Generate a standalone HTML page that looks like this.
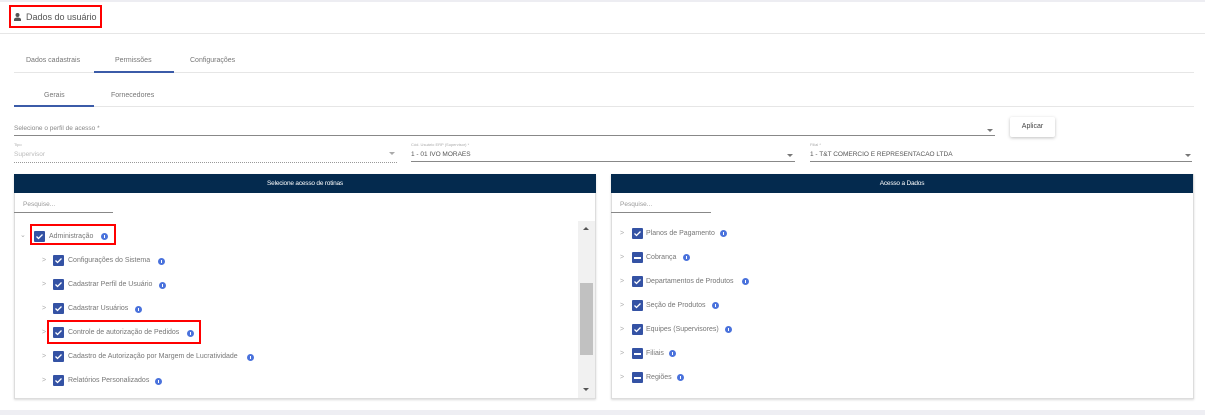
<!DOCTYPE html>
<html><head><meta charset="utf-8"><style>
*{margin:0;padding:0;box-sizing:border-box}
body{width:1205px;height:415px;position:relative;background:#fff;font-family:"Liberation Sans",sans-serif;color:#666;overflow:hidden}
.a{position:absolute;white-space:nowrap}
.t{font-size:7px;color:#777}
.r{margin-top:2px}
.hl{position:absolute;height:1px;background:#e6e6e6}
.cb{position:absolute;width:11px;height:11px;background:#3452a4;border-radius:1px}
.cb svg{position:absolute;left:1px;top:1px}
.dash{position:absolute;left:2px;top:5px;width:7px;height:1.5px;background:#fff}
.i{position:absolute;width:7px;height:7px;border-radius:50%;background:#4a72dc}
.i:after{content:"";position:absolute;left:3px;top:2px;width:1px;height:3px;background:#fff}
.ch{position:absolute;font-size:7px;color:#aaa;margin-top:2px}
.red{position:absolute;border:2.5px solid #f00}
.arr{position:absolute;width:0;height:0;border-left:3px solid transparent;border-right:3px solid transparent;border-top:3px solid #777}
</style></head><body>
<div class="hl" style="left:0;top:0;width:1205px;height:2px;background:#ededf2"></div>
<div class="red" style="left:9px;top:5px;width:93px;height:23px"></div>
<svg class="a" style="left:14px;top:13px" width="7" height="8" viewBox="0 0 7 8"><circle cx="3.5" cy="2" r="2" fill="#555"/><path d="M0 8V6.5C0 5 2 4.5 3.5 4.5S7 5 7 6.5V8Z" fill="#555"/></svg>
<div class="a" style="left:26px;top:12px;font-size:9px;color:#555">Dados do usuário</div>
<div class="hl" style="left:0;top:33px;width:1205px"></div>

<div class="a t" style="left:26px;top:57px">Dados cadastrais</div>
<div class="a t" style="left:115px;top:57px">Permissões</div>
<div class="a t" style="left:190px;top:57px">Configurações</div>
<div class="hl" style="left:14px;top:72px;width:1180px"></div>
<div class="a" style="left:94px;top:71px;width:80px;height:2px;background:#3b5ba8"></div>

<div class="a t" style="left:44px;top:92px">Gerais</div>
<div class="a t" style="left:111px;top:92px">Fornecedores</div>
<div class="hl" style="left:14px;top:106px;width:1180px"></div>
<div class="a" style="left:14px;top:105px;width:80px;height:2px;background:#3b5ba8"></div>

<div class="a" style="left:14px;top:125px;font-size:6.5px;color:#888">Selecione o perfil de acesso *</div>
<div class="a" style="left:14px;top:135px;width:981px;height:1px;background:#888"></div>
<div class="arr" style="left:987px;top:129px"></div>
<div class="a" style="left:1010px;top:117px;width:45px;height:20px;background:#fff;box-shadow:0 1px 3px rgba(0,0,0,.25);border-radius:2px;font-size:7px;color:#444;text-align:center;line-height:19px">Aplicar</div>

<div class="a" style="left:14px;top:142px;font-size:4px;color:#aaa">Tipo</div>
<div class="a" style="left:14px;top:151px;font-size:6.5px;color:#bbb">Supervisor</div>
<div class="a" style="left:14px;top:162px;width:383px;border-top:1px dotted #999"></div>
<div class="arr" style="left:389px;top:152px;border-top-color:#aaa"></div>

<div class="a" style="left:411px;top:142px;font-size:4px;color:#aaa">Cód. Usuário ERP (Supervisor) *</div>
<div class="a" style="left:411px;top:151px;font-size:6.5px;color:#555">1 - 01 IVO MORAES</div>
<div class="a" style="left:411px;top:161px;width:384px;height:1px;background:#888"></div>
<div class="arr" style="left:787px;top:154px"></div>

<div class="a" style="left:810px;top:142px;font-size:4px;color:#aaa">Filial *</div>
<div class="a" style="left:810px;top:151px;font-size:6.5px;color:#555">1 - T&amp;T COMERCIO E REPRESENTACAO LTDA</div>
<div class="a" style="left:810px;top:161px;width:382px;height:1px;background:#888"></div>
<div class="arr" style="left:1185px;top:154px"></div>

<!-- left panel -->
<div class="a" style="left:14px;top:174px;width:582px;height:225px;border:1px solid #ddd;border-top:none;box-shadow:0 1px 2px rgba(0,0,0,.15)"></div>
<div class="a" style="left:14px;top:174px;width:582px;height:19px;background:#042a4e;color:#fff;font-size:6.5px;text-align:center;line-height:19px;letter-spacing:-.2px">Selecione acesso de rotinas</div>
<div class="a" style="left:23px;top:201px;font-size:6.5px;color:#999">Pesquise...</div>
<div class="a" style="left:14px;top:212px;width:99px;height:1px;background:#888"></div>
<div class="a" style="left:578px;top:221px;width:17px;height:177px;background:#f1f1f1"></div>
<div class="a" style="left:580px;top:283px;width:13px;height:72px;background:#c1c1c1"></div>
<div class="arr" style="left:583px;top:227px;border-top:none;border-bottom:3px solid #555"></div>
<div class="arr" style="left:583px;top:388px;border-top-color:#555"></div>

<div class="red" style="left:30px;top:224px;width:86px;height:21px"></div>
<div class="ch" style="left:20px;top:229px">⌄</div>
<div class="cb" style="left:34px;top:231px"><svg width="9" height="9"><path d="M1.5 4.5l2 2 4-4" stroke="#fff" stroke-width="1.3" fill="none"/></svg></div>
<div class="a t r" style="left:49px;top:231px">Administração</div>
<div class="i" style="left:101px;top:233px"></div>

<div class="red" style="left:47px;top:320px;width:154px;height:24px"></div>

<div class="ch" style="left:42px;top:255px">&gt;</div><div class="cb" style="left:53px;top:255px"><svg width="9" height="9"><path d="M1.5 4.5l2 2 4-4" stroke="#fff" stroke-width="1.3" fill="none"/></svg></div><div class="a t r" style="left:68px;top:255px">Configurações do Sistema</div><div class="i" style="left:158px;top:258px"></div>
<div class="ch" style="left:42px;top:279px">&gt;</div><div class="cb" style="left:53px;top:279px"><svg width="9" height="9"><path d="M1.5 4.5l2 2 4-4" stroke="#fff" stroke-width="1.3" fill="none"/></svg></div><div class="a t r" style="left:68px;top:279px">Cadastrar Perfil de Usuário</div><div class="i" style="left:159px;top:282px"></div>
<div class="ch" style="left:42px;top:303px">&gt;</div><div class="cb" style="left:53px;top:303px"><svg width="9" height="9"><path d="M1.5 4.5l2 2 4-4" stroke="#fff" stroke-width="1.3" fill="none"/></svg></div><div class="a t r" style="left:68px;top:303px">Cadastrar Usuários</div><div class="i" style="left:135px;top:306px"></div>
<div class="ch" style="left:42px;top:327px">&gt;</div><div class="cb" style="left:53px;top:327px"><svg width="9" height="9"><path d="M1.5 4.5l2 2 4-4" stroke="#fff" stroke-width="1.3" fill="none"/></svg></div><div class="a t r" style="left:68px;top:327px">Controle de autorização de Pedidos</div><div class="i" style="left:187px;top:330px"></div>
<div class="ch" style="left:42px;top:351px">&gt;</div><div class="cb" style="left:53px;top:351px"><svg width="9" height="9"><path d="M1.5 4.5l2 2 4-4" stroke="#fff" stroke-width="1.3" fill="none"/></svg></div><div class="a t r" style="left:68px;top:351px">Cadastro de Autorização por Margem de Lucratividade</div><div class="i" style="left:247px;top:354px"></div>
<div class="ch" style="left:42px;top:375px">&gt;</div><div class="cb" style="left:53px;top:375px"><svg width="9" height="9"><path d="M1.5 4.5l2 2 4-4" stroke="#fff" stroke-width="1.3" fill="none"/></svg></div><div class="a t r" style="left:68px;top:375px">Relatórios Personalizados</div><div class="i" style="left:155px;top:378px"></div>

<!-- right panel -->
<div class="a" style="left:611px;top:174px;width:583px;height:225px;border:1px solid #ddd;border-top:none;box-shadow:0 1px 2px rgba(0,0,0,.15)"></div>
<div class="a" style="left:611px;top:174px;width:582px;height:19px;background:#042a4e;color:#fff;font-size:6.5px;text-align:center;line-height:19px;letter-spacing:-.2px">Acesso a Dados</div>
<div class="a" style="left:620px;top:201px;font-size:6.5px;color:#999">Pesquise...</div>
<div class="a" style="left:611px;top:212px;width:100px;height:1px;background:#888"></div>

<div class="ch" style="left:620px;top:228px">&gt;</div><div class="cb" style="left:632px;top:228px"><svg width="9" height="9"><path d="M1.5 4.5l2 2 4-4" stroke="#fff" stroke-width="1.3" fill="none"/></svg></div><div class="a t r" style="left:646px;top:228px">Planos de Pagamento</div><div class="i" style="left:720px;top:230px"></div>
<div class="ch" style="left:620px;top:252px">&gt;</div><div class="cb" style="left:632px;top:252px"><div class="dash"></div></div><div class="a t r" style="left:646px;top:252px">Cobrança</div><div class="i" style="left:683px;top:254px"></div>
<div class="ch" style="left:620px;top:276px">&gt;</div><div class="cb" style="left:632px;top:276px"><svg width="9" height="9"><path d="M1.5 4.5l2 2 4-4" stroke="#fff" stroke-width="1.3" fill="none"/></svg></div><div class="a t r" style="left:646px;top:276px">Departamentos de Produtos</div><div class="i" style="left:742px;top:278px"></div>
<div class="ch" style="left:620px;top:300px">&gt;</div><div class="cb" style="left:632px;top:300px"><svg width="9" height="9"><path d="M1.5 4.5l2 2 4-4" stroke="#fff" stroke-width="1.3" fill="none"/></svg></div><div class="a t r" style="left:646px;top:300px">Seção de Produtos</div><div class="i" style="left:712px;top:302px"></div>
<div class="ch" style="left:620px;top:324px">&gt;</div><div class="cb" style="left:632px;top:324px"><svg width="9" height="9"><path d="M1.5 4.5l2 2 4-4" stroke="#fff" stroke-width="1.3" fill="none"/></svg></div><div class="a t r" style="left:646px;top:324px">Equipes (Supervisores)</div><div class="i" style="left:725px;top:326px"></div>
<div class="ch" style="left:620px;top:348px">&gt;</div><div class="cb" style="left:632px;top:348px"><div class="dash"></div></div><div class="a t r" style="left:646px;top:348px">Filiais</div><div class="i" style="left:669px;top:350px"></div>
<div class="ch" style="left:620px;top:372px">&gt;</div><div class="cb" style="left:632px;top:372px"><div class="dash"></div></div><div class="a t r" style="left:646px;top:372px">Regiões</div><div class="i" style="left:677px;top:374px"></div>

<div class="a" style="left:0;top:410px;width:1205px;height:5px;background:#eeeef3"></div>
</body></html>
